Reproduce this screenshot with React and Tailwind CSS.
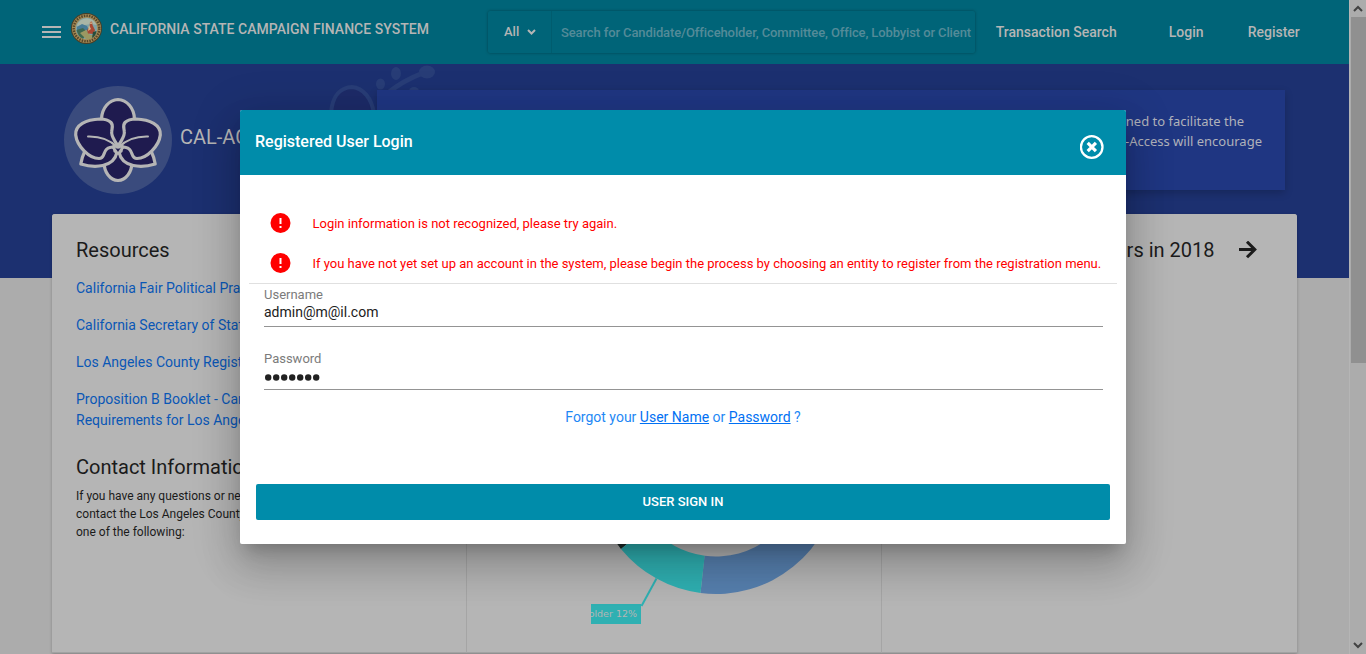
import React from "react";

function Seal() {
  return (
    <svg width="32" height="32" viewBox="0 0 32 32" className="shrink-0">
      <circle cx="15.500" cy="15.500" r="15.5" fill="#4a3d24" />
      <circle cx="15.500" cy="15.500" r="14.6" fill="#a48a54" />
      <circle cx="15.500" cy="15.500" r="12.8" fill="none" stroke="#54452b" strokeWidth="2.400" strokeDasharray="1.5 1.1" />
      <circle cx="15.500" cy="15.500" r="10.7" fill="#7fa3a6" />
      <path d="M5.6 13 Q8 6 16 5.3 Q23 6 25.8 12 L20 11 L14 12Z" fill="#a9b5a5" />
      <path d="M6 14 L11 11 L16 13 L18 17 L6 18Z" fill="#477b96" />
      <path d="M5.5 17 L12 15 L17 20 L12 25.8 Q7 24 5.5 17Z" fill="#3d6850" />
      <path d="M9 20 L15 17 L19 22 L24 22 Q20 27 15 26Z" fill="#9b9862" />
      <path d="M19 9 L21 8.5 L21.500 12 L24 17 L22.500 21 L17 20.500 L16 17 L18.500 14Z" fill="#a94732" />
      <path d="M18 12 L20 16 L17 18Z M20 8 L21 11 L19 11Z" fill="#d0b68a" />
      <path d="M22 19 L25.500 18 Q25 23 21 25Z" fill="#254d3d" />
    </svg>
  );
}

function Orchid() {
  return (
    <svg width="108" height="108" viewBox="0 0 108 108" className="shrink-0">
      <circle cx="54" cy="54" r="54" fill="#3a4b7d" />
      <g fill="#1f1b4f" stroke="#b5b5b5" strokeWidth="3.2" strokeLinejoin="round" strokeLinecap="round">
        <path d="M40.300 77 C40 86 46 94 54 94.500 C62 94 68 86 67.700 77 L54 64Z" />
        <path d="M20.500 66 Q18 71 16.800 78 C30 82 50 82 53 66 L40 50Z" />
        <path d="M87.500 66 Q90 71 91.200 78 C78 82 58 82 55 66 L68 50Z" />
        <path d="M37.500 33 C38 22 45 14 54 13.500 C63 14 70 22 70.500 33 L62 50 L54 60 L46 50Z" />
        <path d="M53.500 60 C51 54 47 51 47.700 45.500 C48 42 49.500 39 47 36.500 C44 33.500 40 33 36 33 C22 33.500 11 39 11.700 49 C13 60 25 72.500 35 72.500 C42 72.500 38 63 46 61.500Z" />
        <path d="M54.500 60 C57 54 61 51 60.300 45.500 C60 42 58.500 39 61 36.500 C64 33.500 68 33 72 33 C86 33.500 97 39 96.300 49 C95 60 83 72.500 73 72.500 C66 72.500 70 63 62 61.500Z" />
      </g>
      <path d="M24 50.500 Q42 50 53 61 M84 50.500 Q66 50 55 61" fill="none" stroke="#b5b5b5" strokeWidth="2" strokeLinecap="round" />
      <path d="M48.500 59 L54 57 L59.500 59 L58.500 66 L54 69 L49.500 66Z" fill="#b5b5b5" />
      <path d="M51 61.500 Q54 64 57 61.500 L54 66Z" fill="#1f1b4f" />
    </svg>
  );
}

function HeroFlower() {
  return (
    <svg className="absolute left-[320px] top-0" width="130" height="80" viewBox="0 0 130 80">
      <path d="M11 50 C12 30 22 23.500 32 23 C43 24 52 34 54 50" fill="#1d2b68" stroke="#283d77" strokeWidth="4" />
      <path d="M68 29 Q82 17 103 9" fill="none" stroke="#283d77" strokeWidth="5" />
      <ellipse cx="107" cy="8" rx="8" ry="6.500" fill="#283d77" />
      <ellipse cx="76" cy="9.500" rx="5" ry="6.500" fill="#283d77" />
      <ellipse cx="60.500" cy="20" rx="4.500" ry="5.500" fill="#283d77" />
      <ellipse cx="94" cy="27" rx="5" ry="4" fill="#283d77" />
    </svg>
  );
}

function Header() {
  return (
    <header className="flex h-16 bg-[#006478] font-medium text-[#b5b5b5]">
      <button className="ml-[42px] mt-[26px] flex h-3 w-[18.500px] flex-col justify-between">
        <span className="h-0.5 w-full bg-[#b5b5b5]" />
        <span className="h-0.5 w-full bg-[#b5b5b5]" />
        <span className="h-0.5 w-full bg-[#b5b5b5]" />
      </button>
      <div className="ml-[10.500px] mt-[13px]"><Seal /></div>
      <div className="ml-[7px] mt-[19px] w-[378px] whitespace-nowrap text-sm leading-5 tracking-[0.025px]">CALIFORNIA STATE CAMPAIGN FINANCE SYSTEM</div>
      <div className="mt-[11px] flex h-[42px] w-[487px] rounded-[2px] text-[13px] shadow-[0_0_3px_rgba(0,0,0,0.35)]">
        <div className="flex w-16 items-center border-r border-[#005c6e] pl-4">
          All
          <svg className="ml-2" width="9" height="6" viewBox="0 0 9 6"><path d="M1 1l3.500 3.500L8 1" fill="none" stroke="#b5b5b5" strokeWidth="2" /></svg>
        </div>
        <div className="flex items-center whitespace-nowrap pl-[9px] pt-px tracking-[-0.115px] text-[#548b98]">Search for Candidate/Officeholder, Committee, Office, Lobbyist or Client</div>
      </div>
      <nav className="mt-[22px] flex whitespace-nowrap pl-[20.700px] text-sm leading-5">
        <a className="w-[173px]">Transaction Search</a>
        <a className="w-[79px]">Login</a>
        <a>Register</a>
      </nav>
    </header>
  );
}

function Resources() {
  return (
    <section className="h-[439px] w-[414px] border-b border-[#a2a2a2] bg-[#b5b5b5] pl-6 pt-[23px] text-[#1b1b1b]">
      <h2 className="text-xl leading-[26px]">Resources</h2>
      <div className="mt-[15px] flex flex-col gap-4 whitespace-nowrap text-sm leading-[21px] text-[#0a57b5]">
        <a>California Fair Political Pra</a>
        <a>California Secretary of State</a>
        <a>Los Angeles County Registr</a>
        <a>Proposition B Booklet - Cam<br />Requirements for Los Angel</a>
      </div>
      <h2 className="mt-[23px] text-xl leading-[26px]">Contact Informatio</h2>
      <p className="mt-[7px] whitespace-nowrap text-xs leading-[18px]">
        If you have any questions or nee<br />contact the Los Angeles County<br />one of the following:
      </p>
    </section>
  );
}

function Chart() {
  return (
    <section className="h-[439px] w-[414px] border-b border-[#a2a2a2] bg-[#b5b5b5]">
      <svg width="414" height="438" viewBox="467 214 414 438">
        <path d="M700.500 593 A123 123 0 1 0 593 471 H630.500 A85.500 85.500 0 1 1 704.500 555.700Z" fill="#567fae" />
        <path d="M593 471 A123 123 0 0 0 621 549 L650 525 A85.500 85.500 0 0 1 630.500 471Z" fill="#1e2b29" />
        <path d="M621 549 A123 123 0 0 0 700.500 593 L704.700 555.700 A85.500 85.500 0 0 1 650 525Z" fill="#2fb0b2" />
        <path d="M656.500 578.500 L641.500 606" stroke="#2fb0b2" strokeWidth="2" />
        <rect x="591" y="604" width="50" height="20" fill="#2fb0b2" />
        <svg x="591" y="604" width="50" height="20">
          <text x="46" y="13" textAnchor="end" fontSize="9.500" fill="#b5b5b5" className="font-['DejaVu_Sans',sans-serif]">older 12%</text>
        </svg>
      </svg>
    </section>
  );
}

function Filers() {
  return (
    <section className="flex h-[439px] w-[415px] justify-end border-b border-[#a2a2a2] bg-[#b5b5b5] pr-[40px] pt-[23px] text-xl leading-[26px] text-[#1b1b1b]">
      <h2 className="whitespace-nowrap">rs in 2018</h2>
      <svg className="ml-[24.500px] mt-1" width="18" height="18" viewBox="0 0 18 18"><path d="M0 8.500h16M8 0.700l7.800 7.800-7.800 7.800" fill="none" stroke="#1b1b1b" strokeWidth="3" /></svg>
    </section>
  );
}

function Scrollbar() {
  return (
    <aside className="flex w-[17px] shrink-0 flex-col items-center border-l border-[#b5b5b5] bg-[#acacac]">
      <svg width="16" height="17" viewBox="0 0 16 17"><path d="M4 11l4-4 4 4" fill="none" stroke="#424242" strokeWidth="2" /></svg>
      <div className="h-[346px] w-[15px] bg-[#909090]" />
      <div className="grow" />
      <svg width="16" height="17" viewBox="0 0 16 17"><path d="M4 6l4 4 4-4" fill="none" stroke="#424242" strokeWidth="2" /></svg>
    </aside>
  );
}

function ErrorRow({ children }) {
  return (
    <div className="flex h-10 items-center pl-[30px] text-[13px] text-[#f00]">
      <svg width="21" height="20" viewBox="0 0 21 20"><circle cx="10.500" cy="10" r="10" fill="#f00" /><path d="M9.500 5h2v6h-2zM9.500 13h2v2h-2z" fill="#fff" /></svg>
      <span className="ml-[21.500px] whitespace-nowrap pt-[2px] tracking-[-0.005px]">{children}</span>
    </div>
  );
}

function LoginDialog() {
  return (
    <div className="h-[434px] w-[886px] overflow-hidden rounded-[2px] bg-white">
      <div className="flex h-[65px] justify-between bg-[#008caa] pl-[15px] pr-[22px] text-white">
        <h1 className="mt-[21px] text-base font-medium leading-[22px]">Registered User Login</h1>
        <svg className="mt-[25px]" width="24" height="24" viewBox="0 0 24 24"><circle cx="11.700" cy="12" r="10.800" fill="none" stroke="#fff" strokeWidth="2.300" /><path d="M7.700 7.900l8.200 8.200M15.900 7.900l-8.200 8.200" stroke="#fff" strokeWidth="3.200" /></svg>
      </div>
      <div className="pt-7">
        <ErrorRow>Login information is not recognized, please try again.</ErrorRow>
        <ErrorRow>If you have not yet set up an account in the system, please begin the process by choosing an entity to register from the registration menu.</ErrorRow>
      </div>
      <div className="ml-[9px] w-[868px] border-t border-[#e0e0e0]" />
      <div className="ml-6 mr-[23px] h-[43px] border-b border-[#949494] pt-[3px]">
        <div className="text-[13px] leading-4 text-[#7b7b7b]">Username</div>
        <div className="text-sm leading-[18px] text-[#212121]">admin@m@il.com</div>
      </div>
      <div className="ml-6 mr-[23px] mt-6 h-[39px] border-b border-[#949494]">
        <div className="text-[13px] leading-4 text-[#7b7b7b]">Password</div>
        <div className="flex gap-[1.500px] pl-[1px] pt-[7px]">
          {[0, 1, 2, 3, 4, 5, 6].map((i) => <svg key={i} width="6.500" height="7" viewBox="0 0 6.500 7"><ellipse cx="3.200" cy="3.500" rx="3.200" ry="3.300" fill="#212121" /></svg>)}
        </div>
      </div>
      <div className="mt-[17px] text-center text-sm leading-5 text-[#1e88f5]">
        Forgot your <a className="text-[#0070f3] underline">User Name</a> or <a className="text-[#0070f3] underline">Password</a> ?
      </div>
      <button className="ml-4 mt-[57px] flex h-9 w-[854px] items-center justify-center rounded-[2px] bg-[#008caa] text-[13px] font-medium text-white">USER SIGN IN</button>
    </div>
  );
}

export default function App() {
  return (
    <div className="relative flex h-[654px] w-[1366px] overflow-hidden bg-[#acacac] font-[Roboto,sans-serif]">
      <div className="flex w-[1349px] flex-col">
        <Header />
        <div className="relative h-[214px] bg-[#1c3070]">
          <HeroFlower />
          <div className="relative flex pl-16">
            <div className="mt-[22px]"><Orchid /></div>
            <div className="ml-2 mt-[60px] w-[197px] whitespace-nowrap text-xl leading-[26px] text-[#b5b5b5]">CAL-AC</div>
            <div className="mt-[26px] h-[100px] w-[908px] whitespace-nowrap bg-[#1f3682] pr-[23px] pt-[21px] text-right font-['Noto_Sans',sans-serif] text-[13px] leading-5 text-[#b0b2ba] shadow-[0_3px_8px_rgba(0,0,0,0.2)]">
              <p className="pr-[18px]">ned to facilitate the</p>
              <p>-Access will encourage</p>
            </div>
          </div>
        </div>
        <main className="relative -mt-16 ml-[52px] flex w-[1245px] gap-px rounded-t-[3px] bg-[#a5a5a5] shadow-[0_1px_3px_rgba(0,0,0,0.25)] [&>section:first-child]:rounded-tl-[3px] [&>section:last-child]:rounded-tr-[3px]">
          <Resources />
          <Chart />
          <Filers />
        </main>
      </div>
      <Scrollbar />
      <div className="absolute inset-0 flex items-center justify-center">
        <div className="rounded-[2px] shadow-[0_11px_15px_-7px_rgba(0,0,0,0.2),0_24px_38px_3px_rgba(0,0,0,0.14),0_9px_46px_8px_rgba(0,0,0,0.12)]">
          <LoginDialog />
        </div>
      </div>
    </div>
  );
}
